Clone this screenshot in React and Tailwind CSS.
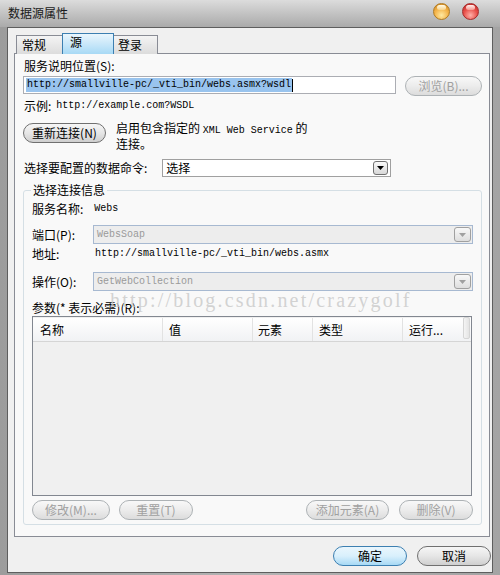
import React from "react";

const Pill = ({ w, disabled, primary, children }) => (
  <div
    className={
      "flex items-center justify-center h-[20px] rounded-full border text-[12px] shrink-0 " +
      (primary
        ? "border-[#3c7fb1] bg-gradient-to-b from-[#eaf6fd] via-[#d9f0fc] to-[#a7d9f5] text-black"
        : disabled
        ? "border-[#adb2b5] bg-gradient-to-b from-[#f8f8f8] via-[#ececec] to-[#dcdcdc] text-[#a0a0a0]"
        : "border-[#707070] bg-gradient-to-b from-[#f6f6f6] via-[#e6e6e6] to-[#cfcfcf] text-black")
    }
    style={{ width: w }}
  >
    {children}
  </div>
);

const Combo = ({ text }) => (
  <div className="flex items-center h-[19px] w-[380px] border border-[#a7b9d1] bg-[#ededed] pl-[3px] pr-[1px]">
    <span className="font-['Liberation_Mono',monospace] text-[10px] text-[#9a9a9a] leading-none">{text}</span>
    <div className="ml-auto w-[17px] h-[15px] rounded-[3px] border border-[#a0a0a0] bg-gradient-to-b from-[#f8f8f8] to-[#dedede] flex items-center justify-center">
      <svg width="7" height="4" viewBox="0 0 7 4"><path d="M0 0h7L3.5 4z" fill="#a0a0a0" /></svg>
    </div>
  </div>
);

export default function App() {
  return (
    <div className="w-[500px] h-[575px] overflow-hidden bg-gradient-to-r from-[#9c9c9c] via-[#b4b4b4] to-[#a4a4a4] font-['Noto_Sans_CJK_SC',sans-serif] text-[12px] text-black relative">
      {/* title bar */}
      <div className="h-[27px] bg-gradient-to-b from-[#dcdcdc] to-[#aaaaaa] flex items-center pl-[8px] relative">
        <span className="text-[12px] leading-none mt-[-2px] text-[#1a1a1a]">数据源属性</span>
        <div className="absolute left-[433px] top-[3px] w-[17px] h-[17px] rounded-full border border-[#b07a20] bg-[radial-gradient(circle_at_50%_75%,#ffe9a0_0%,#f4b44a_50%,#c8801e_100%)]">
          <div className="absolute left-[3px] top-[1px] w-[9px] h-[5px] rounded-full bg-gradient-to-b from-[#fffbe8] to-[#f7d38a]" />
        </div>
        <div className="absolute left-[462px] top-[3px] w-[17px] h-[17px] rounded-full border border-[#a42a2a] bg-[radial-gradient(circle_at_50%_75%,#ffb0a8_0%,#e8504a_50%,#b81e1e_100%)]">
          <div className="absolute left-[3px] top-[1px] w-[9px] h-[5px] rounded-full bg-gradient-to-b from-[#fff0ee] to-[#f39a92]" />
        </div>
      </div>

      {/* client */}
      <div className="ml-[7px] w-[486px] h-[546px] border border-[#5e5e5e] bg-[#f0f0f0] flex flex-col">
        {/* tabs */}
        <div className="flex items-end h-[20px] mt-[6px] ml-[8px] relative z-10">
          <div className="w-[47px] h-[19px] border border-b-0 border-[#898c95] bg-gradient-to-b from-[#f4f4f4] to-[#dcdcdc] pl-[5px] pt-[2px] leading-[14px]">常规</div>
          <div className="-ml-px w-[52px] h-[21px] border border-b-0 border-[#3c7fb1] bg-gradient-to-b from-[#eaf6fd] to-[#a7d9f5] pl-[7px] pt-[1px] leading-[14px] relative z-10">源</div>
          <div className="-ml-px w-[45px] h-[19px] border border-b-0 border-[#898c95] bg-gradient-to-b from-[#f4f4f4] to-[#dcdcdc] pl-[4px] pt-[2px] leading-[14px]">登录</div>
        </div>

        {/* panel */}
        <div className="-mt-px ml-[6px] w-[476px] h-[484px] border border-[#898c95] bg-[#f9f9f9] flex flex-col pl-[8px] pr-[7px] relative">
          <div className="h-[14px] mt-[5px] leading-[14px] pl-px">服务说明位置(S):</div>
          <div className="flex mt-[3px] h-[20px]">
            <div className="w-[373px] h-[18px] border border-[#abadb3] bg-white flex items-center pl-[2px]">
              <span className="font-['Liberation_Mono',monospace] text-[10px] leading-[14px] bg-[#99c4ee] px-px">http://smallville-pc/_vti_bin/webs.asmx?wsdl</span>
              <span className="w-px h-[13px] bg-black" />
            </div>
            <div className="ml-auto">
              <Pill w={77} disabled>浏览(B)...</Pill>
            </div>
          </div>
          <div className="h-[14px] mt-[3px] leading-[14px] pl-px flex items-center">
            <span>示例:</span>
            <span className="ml-[5px] font-['Liberation_Mono',monospace] text-[10px]">http://example.com?WSDL</span>
          </div>
          <div className="flex mt-[10px] h-[20px]">
            <Pill w={83}>重新连接(N)</Pill>
            <div className="ml-[10px] leading-[13px] -mt-[2px]">
              <div>
                启用包含指定的 <span className="font-['Liberation_Mono',monospace] text-[10px]">XML Web Service</span> 的
              </div>
              <div>连接。</div>
            </div>
          </div>
          <div className="flex mt-[16px] h-[18px] items-center">
            <span className="pl-px">选择要配置的数据命令:</span>
            <div className="ml-[15px] w-[229px] h-[18px] border border-[#a0a0a0] bg-white flex items-center pl-[3px] pr-[2px]">
              <span>选择</span>
              <div className="ml-auto w-[15px] h-[14px] rounded-[3px] border border-[#707070] bg-gradient-to-b from-[#fafafa] to-[#d8d8d8] flex items-center justify-center">
                <svg width="7" height="4" viewBox="0 0 7 4"><path d="M0 0h7L3.5 4z" fill="#000" /></svg>
              </div>
            </div>
          </div>

          {/* group box */}
          <div className="mt-[13px] w-[459px] h-[335px] border border-[#d5dfe5] rounded-[3px] relative flex flex-col pl-[8px]">
            <div className="absolute left-[7px] top-[-8px] px-[2px] bg-[#f9f9f9] leading-[14px]">选择连接信息</div>
            <div className="h-[14px] mt-[11px] leading-[14px] flex items-center">
              <span>服务名称:</span>
              <span className="ml-[11px] font-['Liberation_Mono',monospace] text-[10px]">Webs</span>
            </div>
            <div className="flex mt-[9px] items-center">
              <span className="w-[61px]">端口(P):</span>
              <Combo text="WebsSoap" />
            </div>
            <div className="h-[14px] mt-[3px] leading-[14px] flex items-center">
              <span className="w-[63px]">地址:</span>
              <span className="font-['Liberation_Mono',monospace] text-[10px]">http://smallville-pc/_vti_bin/webs.asmx</span>
            </div>
            <div className="flex mt-[11px] items-center">
              <span className="w-[61px]">操作(O):</span>
              <Combo text="GetWebCollection" />
            </div>
            <div className="h-[14px] mt-[10px] leading-[14px]">参数(* 表示必需)(R):</div>
            <div className="mt-px w-[440px] h-[180px] border border-[#828790] bg-[#f0f0f0] flex flex-col">
              <div className="flex h-[24px] bg-gradient-to-b from-white to-[#f1f2f4] border-b border-[#d5d5d5] mt-px">
                <div className="w-[130px] border-r border-[#e2e2e2] pl-[7px] leading-[24px]">名称</div>
                <div className="w-[90px] border-r border-[#e2e2e2] pl-[6px] leading-[24px]">值</div>
                <div className="w-[60px] border-r border-[#e2e2e2] pl-[5px] leading-[24px]">元素</div>
                <div className="w-[90px] border-r border-[#e2e2e2] pl-[6px] leading-[24px]">类型</div>
                <div className="w-[60px] pl-[6px] leading-[24px]">运行...</div>
                <div className="w-[7px] border border-[#d5d5d5] bg-gradient-to-r from-[#f4f4f4] to-[#e4e4e4] -mt-px h-[22px] rounded-[2px]" />
              </div>
            </div>
            <div className="flex mt-[4px] h-[20px] w-[441px]">
              <Pill w={78} disabled>修改(M)...</Pill>
              <div className="ml-[9px]"><Pill w={74} disabled>重置(T)</Pill></div>
              <div className="ml-auto"><Pill w={83} disabled>添加元素(A)</Pill></div>
              <div className="ml-[10px]"><Pill w={74} disabled>删除(V)</Pill></div>
            </div>
          </div>

          {/* watermark */}
          <div className="absolute left-[95px] top-[236px] font-['Liberation_Serif',serif] text-[20px] leading-none tracking-[2.2px] text-[#c8c8c8]/80 pointer-events-none">
            http://blog.csdn.net/crazygolf
          </div>
        </div>

        {/* bottom buttons */}
        <div className="flex justify-end mt-[9px] pr-px gap-[10px]">
          <Pill w={74} primary>确定</Pill>
          <Pill w={74}>取消</Pill>
        </div>
      </div>
    </div>
  );
}
